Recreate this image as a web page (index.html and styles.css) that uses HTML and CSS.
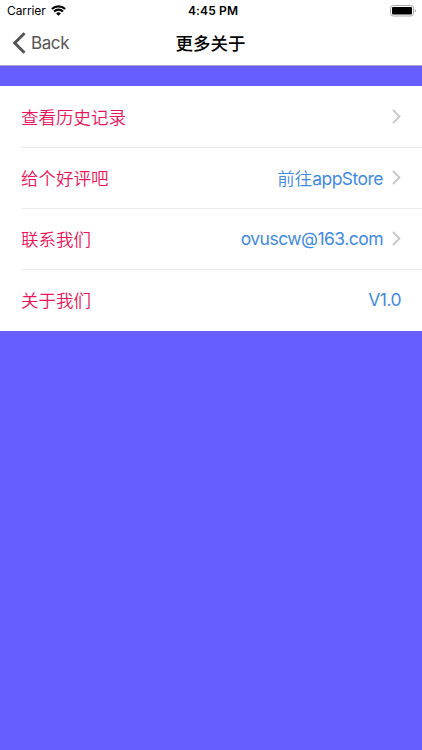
FILE: index.html
```html
<!DOCTYPE html>
<html lang="zh">
<head>
  <meta charset="utf-8">
  <title>更多关于</title>
  <link rel="stylesheet" href="styles.css">
</head>
<body>
  <div class="status-bar">
    <div class="carrier">
      <span>Carrier</span>
      <svg class="wifi" width="15" height="11" viewBox="0 0 15 11">
        <path d="M0.9 4.1a9.3 9.3 0 0 1 13.2 0M3.1 6.5a6.2 6.2 0 0 1 8.8 0" fill="none" stroke="#000" stroke-width="2.1"/>
        <path d="M7.5 10.8L5.1 8.4a3.4 3.4 0 0 1 4.8 0z"/>
      </svg>
    </div>
    <span class="clock">4:45 PM</span>
    <svg class="battery" width="28" height="12" viewBox="0 0 28 12">
      <rect x="1.5" y="0.5" width="23" height="10.5" rx="2.8" fill="none" stroke="#aaa"/>
      <rect x="3" y="2" width="20" height="7.5" rx="1"/>
      <path d="M25.8 4a2 2 0 0 1 0 3.6z" fill="#999"/>
    </svg>
  </div>

  <div class="nav-bar">
    <a class="back">
      <svg width="14" height="22" viewBox="0 0 14 22"><path d="M12.5 1.2L2.7 11l9.8 9.8" fill="none" stroke="#555" stroke-width="3"/></svg>
      <span>Back</span>
    </a>
    <h1 class="title">更多关于</h1>
  </div>

  <div class="list">
    <div class="row">
      <span class="label">查看历史记录</span>
      <svg class="arrow" width="9" height="15" viewBox="0 0 9 15"><path d="M1 1l6.5 6.5L1 14"/></svg>
    </div>
    <div class="row">
      <span class="label">给个好评吧</span>
      <span class="value">前往<span class="latin">appStore</span></span>
      <svg class="arrow" width="9" height="15" viewBox="0 0 9 15"><path d="M1 1l6.5 6.5L1 14"/></svg>
    </div>
    <div class="row">
      <span class="label">联系我们</span>
      <span class="value latin">ovuscw@163.com</span>
      <svg class="arrow" width="9" height="15" viewBox="0 0 9 15"><path d="M1 1l6.5 6.5L1 14"/></svg>
    </div>
    <div class="row">
      <span class="label">关于我们</span>
      <span class="value latin">V1.0</span>
    </div>
  </div>
</body>
</html>
```
FILE: styles.css
```css
body {
  margin: 0;
  min-height: 100vh;
  background-color: #665eff;
  font-family: Inter, "Noto Sans CJK SC", sans-serif;
}

.status-bar {
  height: 21px;
  padding: 0 5px 0 7px;
  box-sizing: border-box;
  display: grid;
  grid-template-columns: 1fr auto 1fr;
  align-items: center;
  background-color: #fff;
  font-size: 12px;
}

.carrier {
  display: flex;
  align-items: center;
  gap: 5px;
  letter-spacing: -0.1px;
}

.clock {
  margin-left: 2px;
  font-weight: 600;
  letter-spacing: 0.15px;
}

.battery {
  justify-self: end;
}

.nav-bar {
  height: 45px;
  padding: 0 12px;
  box-sizing: border-box;
  border-bottom: 1px solid #aaa7d8;
  display: grid;
  grid-template-columns: 1fr auto 1fr;
  align-items: center;
  background-color: #fff;
}

.back {
  display: flex;
  align-items: center;
  gap: 5px;
  color: #555;
  font-size: 17px;
  letter-spacing: -0.4px;
}

.title {
  margin: 0 1px 2px 0;
  font-size: 17.5px;
  font-weight: 500;
}

.list {
  margin-top: 20px;
  background-color: #fff;
}

.row {
  height: 61px;
  margin-left: 21px;
  padding: 0 21px 2px 0;
  box-sizing: border-box;
  border-bottom: 1px solid #ececee;
  display: flex;
  align-items: center;
}

.row:first-child {
  height: 62px;
  padding-bottom: 0;
}

.row:last-child {
  border-bottom: none;
}

.label {
  flex-grow: 1;
  color: #ec1459;
  font-size: 17.5px;
  font-weight: 350;
}

.value {
  color: #3f8ae4;
  font-size: 17.5px;
  font-weight: 350;
}

.latin {
  font-weight: 380;
  letter-spacing: -0.53px;
}

.arrow {
  margin-left: 9px;
  fill: none;
  stroke: #c7c7cc;
  stroke-width: 1.8;
}
```
